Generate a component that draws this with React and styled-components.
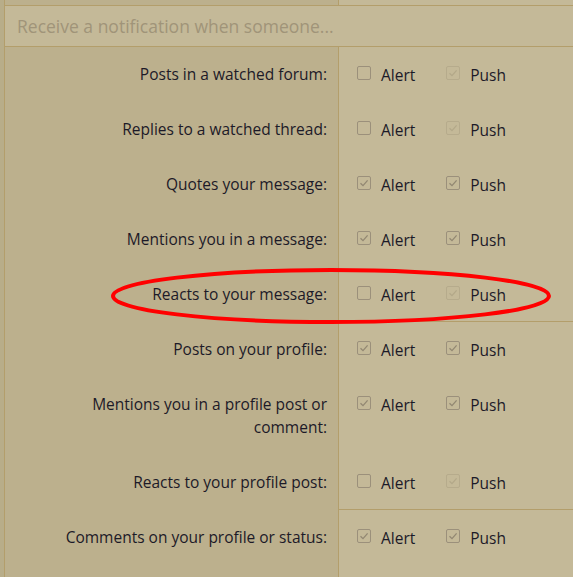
import React from "react";
import styled, { createGlobalStyle } from "styled-components";

const rows = [
  { label: "Posts in a watched forum:", alert: false, push: true, pushOff: true },
  { label: "Replies to a watched thread:", alert: false, push: true, pushOff: true },
  { label: "Quotes your message:", alert: true, push: true },
  { label: "Mentions you in a message:", alert: true, push: true },
  { label: "Reacts to your message:", alert: false, push: true, pushOff: true, split: true },
  { label: "Posts on your profile:", alert: true, push: true },
  { label: "Mentions you in a profile post or comment:", alert: true, push: true },
  { label: "Reacts to your profile post:", alert: false, push: true, pushOff: true, split: true },
  { label: "Comments on your profile or status:", alert: true, push: true },
];

export default function App() {
  return (
    <>
      <GlobalStyle />
      <Page>
        <TopStrip>
          <TopLeft />
          <TopRight />
        </TopStrip>
        <Header>Receive a notification when someone...</Header>
        {rows.map((r) => (
          <Row key={r.label}>
            <Label>{r.label}</Label>
            <Controls $split={r.split}>
              <Check checked={r.alert} text="Alert" />
              <Check checked={r.push} disabled={r.pushOff} text="Push" />
            </Controls>
          </Row>
        ))}
        <Highlight viewBox="0 0 573 577">
          <ellipse cx="331" cy="296" rx="218" ry="26" fill="none" stroke="#ff0000" strokeWidth="4" />
        </Highlight>
      </Page>
    </>
  );
}

function Check({ checked, disabled, text }) {
  return (
    <Option>
      <Box $disabled={disabled}>
        {checked && (
          <svg width="10" height="10" viewBox="0 0 10 10">
            <path d="M1.5 5.2 L4 7.6 L8.6 2.4" fill="none" stroke="currentColor" strokeWidth="1.3" />
          </svg>
        )}
      </Box>
      <span>{text}</span>
    </Option>
  );
}

const GlobalStyle = createGlobalStyle`
  body {
    margin: 0;
    background: #b8ad89;
    font-family: "Open Sans", "Noto Sans", sans-serif;
  }
`;

const Page = styled.div`
  position: relative;
  margin-left: 4px;
  border-left: 1px solid #b39e6b;
  height: 577px;
  overflow: hidden;
  background: linear-gradient(
    to right,
    #bcb08d 333px,
    #b39e6b 333px,
    #b39e6b 334px,
    #c4b998 334px
  );
`;

const TopStrip = styled.div`
  display: grid;
  grid-template-columns: 333px 1fr;
  height: 5px;
  border-bottom: 1px solid #b39e6b;
`;

const TopLeft = styled.div`
  background: #bcb08d;
`;

const TopRight = styled.div`
  background: #c4b998;
  border-left: 1px solid #b39e6b;
`;

const Header = styled.div`
  background: #c4b998;
  color: #a09479;
  font-size: 17.5px;
  height: 40px;
  line-height: 40px;
  padding-left: 12px;
  border-bottom: 1px solid #b39e6b;
`;

const Row = styled.div`
  display: grid;
  grid-template-columns: 333px 1fr;
`;

const Label = styled.div`
  background: #bcb08d;
  color: #1c1a28;
  font-size: 15.5px;
  line-height: 23px;
  text-align: right;
  padding: 16px 11px 16px 40px;
`;

const Controls = styled.div`
  background: #c4b998;
  border-left: 1px solid #b39e6b;
  display: flex;
  align-items: flex-start;
  gap: 31px;
  padding: 16px 0 0 18px;
  box-shadow: ${(p) => (p.$split ? "inset 0 -1px 0 #b39e6b" : "none")};
`;

const Option = styled.label`
  display: flex;
  align-items: center;
  gap: 10px;
  height: 23px;
  font-size: 15.5px;
  color: #1c1a28;
`;

const Box = styled.span`
  width: 12px;
  height: 12px;
  border: 1.5px solid ${(p) => (p.$disabled ? "#b6ab8c" : "#9b907b")};
  border-radius: 2px;
  color: ${(p) => (p.$disabled ? "#b3a889" : "#928772")};
  display: flex;
  align-items: center;
  justify-content: center;
  margin-top: -3px;
`;

const Highlight = styled.svg`
  position: absolute;
  left: -5px;
  top: 0;
  width: 573px;
  height: 577px;
  pointer-events: none;
`;
